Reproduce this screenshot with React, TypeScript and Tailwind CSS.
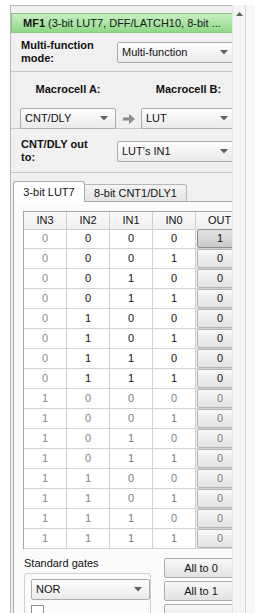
import React from 'react';

const Arrow = () => (
  <svg width="8" height="5" viewBox="0 0 8 5" className="shrink-0">
    <path d="M0 0 H8 L4 4.5 Z" fill="#5f5f5f" />
  </svg>
);

const Select = ({ text, className }: { text: string; className: string }) => (
  <div className={`h-[21px] shrink-0 border border-[#acacac] rounded-[2px] bg-linear-to-b from-[#fdfdfd] to-[#eaeaea] flex items-center justify-between pl-[4px] pr-[7px] text-[11px] text-[#111] ${className}`}>
    <span className="whitespace-nowrap">{text}</span>
    <Arrow />
  </div>
);

const Btn = ({ text, pressed, dim }: { text: string; pressed?: boolean; dim?: boolean }) => (
  <div className={`h-[19px] mx-[1px] border rounded-[2px] flex items-center justify-center text-[11px] ${pressed ? 'border-[#8c8c8c] bg-linear-to-b from-[#e4e4e4] to-[#c9c9c9]' : 'border-[#b4b4b4] bg-linear-to-b from-[#f8f8f8] to-[#e2e2e2]'} ${dim ? 'text-[#7d7d7d]' : 'text-[#111]'}`}>
    {text}
  </div>
);

const rows = Array.from({ length: 16 }, (_, i) => ({
  in3: (i >> 3) & 1,
  in2: (i >> 2) & 1,
  in1: (i >> 1) & 1,
  in0: i & 1,
  out: i === 0 ? 1 : 0,
  dim: i >= 8,
}));

export default function App() {
  return (
    <div className="w-[255px] h-[613px] overflow-hidden bg-white flex pt-[5px] font-['Liberation_Sans',Arial,sans-serif]">
      {/* panel */}
      <div className="ml-[10px] w-[222px] h-[608px] overflow-hidden border-l border-t border-[#b9b9b9] bg-[#f0f0f0] pt-[7px]">
        <div className="w-[228px]">
          {/* header */}
          <div className="h-[20px] border border-[#86c47f] bg-linear-to-b from-[#c8f0c2] to-[#8fd887] flex items-center pl-[11px] text-[11px] text-[#161616] whitespace-nowrap overflow-hidden">
            <span className="font-bold">MF1</span>
            <span>&nbsp;(3-bit LUT7, DFF/LATCH10, 8-bit ...</span>
          </div>

          {/* multi-function mode */}
          <div className="h-[39px] flex items-center pl-[10px] border-b border-[#c4c4c4]">
            <div className="w-[96px] text-[11px] font-bold leading-[13px] text-[#111]">Multi-function<br />mode:</div>
            <Select text="Multi-function" className="w-[119px]" />
          </div>

          {/* macrocells */}
          <div className="h-[57px] pl-[9px] pt-[10px] border-b border-[#c4c4c4]">
            <div className="flex text-[11px] font-bold text-[#111] leading-[14px]">
              <div className="w-[96px] text-center">Macrocell A:</div>
              <div className="w-[25px]" />
              <div className="w-[95px] text-center">Macrocell B:</div>
            </div>
            <div className="flex items-center mt-[12px]">
              <Select text="CNT/DLY" className="w-[96px]" />
              <div className="w-[25px] flex justify-center">
                <svg width="14" height="12" viewBox="0 0 14 12">
                  <path d="M1 4.5 H7 V1 L13 6 L7 11 V7.5 H1 Z" fill="#8a8a8a" />
                </svg>
              </div>
              <Select text="LUT" className="w-[95px]" />
            </div>
          </div>

          {/* out to */}
          <div className="h-[44px] flex items-center pl-[10px] border-b border-[#c4c4c4]">
            <div className="w-[96px] text-[11px] font-bold leading-[13px] text-[#111]">CNT/DLY out<br />to:</div>
            <Select text="LUT's IN1" className="w-[119px] mt-[2px]" />
          </div>

          {/* tabs */}
          <div className="pl-[2px] pt-[8px]">
            <div className="flex items-end h-[20px] text-[11px] text-[#111]">
              <div className="h-[21px] w-[72px] border border-b-0 border-[#a9a9a9] rounded-t-[3px] bg-white flex items-center justify-center relative z-10 -mb-[1px]">3-bit LUT7</div>
              <div className="h-[17px] w-[102px] border border-l-0 border-b-0 border-[#b5b5b5] rounded-tr-[3px] bg-linear-to-b from-[#f4f4f4] to-[#e4e4e4] flex items-center justify-center">8-bit CNT1/DLY1</div>
            </div>

            {/* tab pane */}
            <div className="border-l border-t border-[#a9a9a9] bg-[#fbfbfb] pl-[9px] pt-[9px]">
              <div className="border-l border-t border-[#a8a8a8] w-[220px] text-[11px]">
                <div className="grid grid-cols-[43px_43px_43px_43px_48px] h-[17px] bg-linear-to-b from-[#fafafa] to-[#efefef] text-[#111]">
                  {['IN3', 'IN2', 'IN1', 'IN0', 'OUT'].map((h) => (
                    <div key={h} className="border-r border-b border-[#cfcfcf] flex items-center justify-center">{h}</div>
                  ))}
                </div>
                {rows.map((r, i) => (
                  <div key={i} className="grid grid-cols-[43px_43px_43px_43px_48px] h-[20px] bg-white">
                    <div className="border-r border-b border-[#d2d2d2] flex items-center justify-center text-[#888]">{r.in3}</div>
                    {[r.in2, r.in1, r.in0].map((v, j) => (
                      <div key={j} className={`border-r border-b border-[#d2d2d2] flex items-center justify-center ${r.dim ? 'text-[#7d7d7d]' : 'text-[#111]'}`}>{v}</div>
                    ))}
                    <div className="border-b border-[#d2d2d2] bg-[#f0f0f0]">
                      <Btn text={String(r.out)} pressed={r.out === 1} dim={r.dim} />
                    </div>
                  </div>
                ))}
              </div>

              {/* bottom controls */}
              <div className="flex mt-[7px] text-[11px] text-[#111]">
                <div className="w-[141px]">
                  <div className="leading-[14px] pl-[1px]">Standard gates</div>
                  <div className="ml-[1px] mt-[3px] w-[127px] h-[50px] border border-[#d0d0d0] rounded-[3px] pl-[6px] pt-[5px]">
                    <Select text="NOR" className="w-[119px]" />
                    <div className="flex items-center mt-[5px]">
                      <div className="w-[13px] h-[13px] border border-[#8f8f8f] bg-white" />
                    </div>
                  </div>
                </div>
                <div className="flex flex-col gap-[3px] pt-[2px]">
                  <div className="w-[74px] h-[20px] border border-[#acacac] rounded-[2px] bg-linear-to-b from-[#f8f8f8] to-[#e2e2e2] flex items-center justify-center">All to 0</div>
                  <div className="w-[74px] h-[20px] border border-[#acacac] rounded-[2px] bg-linear-to-b from-[#f8f8f8] to-[#e2e2e2] flex items-center justify-center">All to 1</div>
                  <div className="w-[74px] h-[20px] border border-[#acacac] rounded-[2px] bg-linear-to-b from-[#f8f8f8] to-[#e2e2e2]" />
                </div>
              </div>
            </div>
          </div>
        </div>
      </div>

      {/* scrollbar */}
      <div className="w-[13px] h-[608px] bg-[#f4f4f4] border-l border-[#e6e6e6] flex flex-col items-center">
        <div className="h-[17px] flex items-center justify-center">
          <svg width="7" height="4" viewBox="0 0 7 4">
            <path d="M0 4 L3.5 0 L7 4 Z" fill="#606060" />
          </svg>
        </div>
      </div>
      <div className="w-[10px] h-[608px] border-l border-[#d6d6d6] bg-[#f7f7f7]" />
    </div>
  );
}
